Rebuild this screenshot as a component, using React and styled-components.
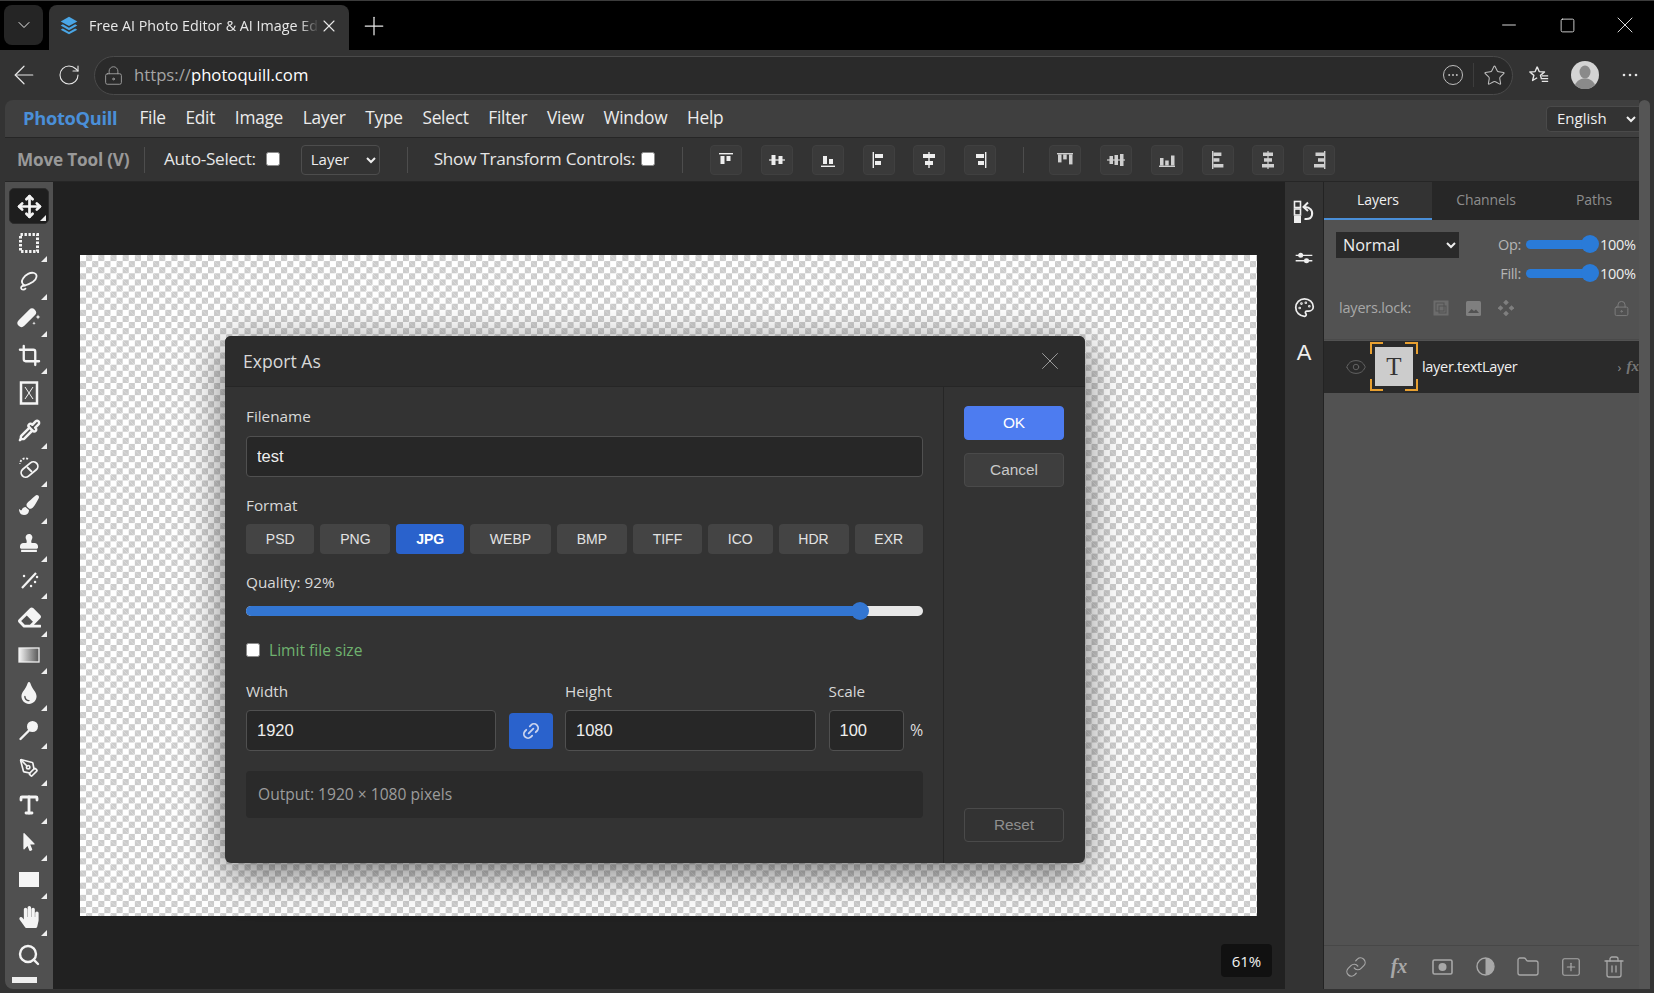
import React from 'react'
import styled, { createGlobalStyle } from 'styled-components'
import {
  ArrowLeft, ChevronDown, Crop, Eye, Folder, Link, Link2, LockKeyhole, Minus,
  Move, Palette, PenTool, Pipette, Plus, RotateCw, Search, Square, SquarePlus, Star, Trash2, Type, X
} from 'lucide-react'
import { FaEraser, FaHandPaper, FaMousePointer, FaPaintBrush, FaStamp, FaTint } from 'react-icons/fa'

const UI_FONT = `'Open Sans', 'Noto Sans', sans-serif`
const ARIAL = `'Liberation Sans', Arial, sans-serif`

const GlobalStyle = createGlobalStyle`
  html, body { margin: 0; padding: 0; background: #333; }
  * { box-sizing: border-box; }
  body { font-family: ${UI_FONT}; overflow: hidden; }
`

const Page = styled.div`
  position: relative;
  width: 1654px;
  height: 993px;
  display: flex;
  flex-direction: column;
  background: #333;
  overflow: hidden;
`

/* browser chrome */
const TitleBar = styled.div`
  height: 50px;
  flex: none;
  background: #000;
  border-top: 1px solid #3c3c3c;
  display: flex;
  align-items: flex-end;
  color: #e8e8e8;
`
const TabMenu = styled.div`
  width: 39px;
  height: 40px;
  margin: 0 6px 5px 4px;
  background: #252525;
  border-radius: 8px;
  display: flex;
  align-items: center;
  justify-content: center;
`
const Tab = styled.div`
  width: 300px;
  height: 45px;
  background: #333;
  border-radius: 8px 8px 0 0;
  display: flex;
  align-items: center;
  padding: 0 9px 3px 10px;
`
const TabTitle = styled.div`
  width: 240px;
  flex: none;
  padding: 0 0 1px 10px;
  font-size: 14.3px;
  white-space: nowrap;
  overflow: hidden;
  mask-image: linear-gradient(to right, #000 92%, transparent 100%);
`
const NewTab = styled.div`
  margin: 0 0 6px 10px;
  height: 36px;
  display: flex;
  align-items: center;
`
const WindowButtons = styled.div`
  margin-left: auto;
  display: flex;
  align-items: center;
  padding-bottom: 11px;
`
const WindowSlot = styled.div`
  width: 58px;
  display: flex;
  align-items: center;
  justify-content: center;
`
const BrowserBar = styled.div`
  height: 50px;
  flex: none;
  background: #333;
  display: flex;
  align-items: center;
  padding: 0 12px 0 9px;
  color: #e6e6e6;
`
const NavSlot = styled.div`
  width: ${p => p.$w}px;
  display: flex;
  align-items: center;
  flex: none;
`
const AddressBar = styled.div`
  width: 1420px;
  height: 39px;
  margin-left: 6px;
  background: #2a2a2a;
  border: 1px solid #4a4a4a;
  border-radius: 20px;
  display: flex;
  align-items: center;
  padding: 0 6px 0 8px;
`
const Url = styled.div`
  margin: 0 0 1px 10px;
  font-size: 16.7px;
  color: #fff;
  span { color: #a5a5a5; }
`
const AddressEnd = styled.div`
  margin-left: auto;
  display: flex;
  align-items: center;
  gap: 9px;
  color: #bdbdbd;
`
const AddressDivider = styled.div`
  width: 1px;
  height: 24px;
  background: #3d3d3d;
`
const FavoritesSlot = styled.div`
  width: 22px;
  margin-left: 15px;
  flex: none;
  display: flex;
`
const Avatar = styled.div`
  width: 28px;
  height: 28px;
  margin: 0 23px 0 21px;
  flex: none;
  svg { display: block; }
`

/* app frame */
const Shell = styled.div`
  flex: 1;
  min-height: 0;
  display: flex;
  padding: 0 4px 4px 5px;
`
const AppColumn = styled.div`
  width: 1634px;
  flex: none;
  display: flex;
  flex-direction: column;
  border-radius: 8px 0 0 8px;
  overflow: hidden;
`
const ScrollStrip = styled.div`
  width: 11px;
  flex: none;
  background: #555;
  border-radius: 6px 6px 0 0;
`
const MenuBar = styled.div`
  height: 38px;
  flex: none;
  background: #3f3f3f;
  border-bottom: 1px solid #262626;
  display: flex;
  align-items: center;
  padding-left: 18px;
`
const Brand = styled.div`
  font-weight: 700;
  font-size: 18.3px;
  letter-spacing: -0.3px;
  color: #4a8fd8;
  margin: 0 22px 3px 0;
`
const MenuItem = styled.div`
  font-size: 17.3px;
  letter-spacing: -0.25px;
  color: #ececec;
  margin: 0 19.7px 3px 0;
`
const baseSelect = `
  font-family: ${UI_FONT};
  color: #eee;
  outline: none;
`
const LanguageSelect = styled.select`
  ${baseSelect}
  margin-left: auto;
  width: 93px;
  height: 26px;
  background: #333;
  border: 1px solid #4a4a4a;
  border-right: none;
  border-radius: 5px 0 0 5px;
  font-size: 15px;
  padding: 0 0 2px 6px;
`
const OptionsBar = styled.div`
  height: 44px;
  flex: none;
  background: #333;
  border-bottom: 1px solid #262626;
  display: flex;
  align-items: center;
  padding-left: 12px;
`
const ToolName = styled.div`
  width: 113px;
  flex: none;
  white-space: nowrap;
  font-size: 17.2px;
  font-weight: 700;
  letter-spacing: -0.2px;
  color: #999;
  margin: 0 14px 1px 0;
`
const Sep = styled.div`
  width: 1px;
  height: ${p => p.$h || 26}px;
  background: #4d4d4d;
  flex: none;
  margin-right: ${p => p.$mr}px;
`
const OptionLabel = styled.label`
  display: flex;
  align-items: center;
  gap: ${p => p.$gap}px;
  font-size: 17.2px;
  letter-spacing: -0.3px;
  line-height: 24px;
  color: #e6e6e6;
  margin-right: ${p => p.$mr}px;
  padding-bottom: 2px;
  white-space: nowrap;
`
const Check = styled.input.attrs({ type: 'checkbox', readOnly: true })`
  appearance: none;
  width: 14px;
  height: 14px;
  margin: 0;
  background: #fff;
  border: 1px solid #8a8a8a;
  border-radius: 2.5px;
  flex: none;
`
const LayerSelect = styled.select`
  ${baseSelect}
  width: 79px;
  height: 30px;
  background: #333;
  border: 1px solid #4d4d4d;
  border-radius: 4px;
  font-size: 15px;
  padding: 0 0 2px 5px;
  margin-right: 27px;
`
const AlignGroup = styled.div`
  display: flex;
  gap: 18.8px;
  margin-right: ${p => p.$mr || 0}px;
`
const AlignButton = styled.div`
  width: 32px;
  height: 30px;
  background: #3a3a3a;
  border: 1px solid #404040;
  border-radius: 4px;
  display: flex;
  align-items: center;
  justify-content: center;
  color: ${p => p.$dim ? '#cfcfcf' : '#eee'};
`

/* workspace */
const Workspace = styled.div`
  flex: 1;
  min-height: 0;
  display: flex;
  background: #333;
`
const ToolColumn = styled.div`
  width: 48px;
  flex: none;
  background: #505050;
  padding: 6px 4px 0;
  position: relative;
  overflow: hidden;
`
const ToolButton = styled.div`
  position: relative;
  height: ${p => p.$active ? 36 : 37.45}px;
  margin-bottom: ${p => p.$active ? 0.7 : 0}px;
  border-radius: 5px;
  background: ${p => p.$active ? '#1e1e1e' : 'transparent'};
  border: ${p => p.$active ? '1px solid #2c2c2c' : 'none'};
  display: flex;
  align-items: center;
  justify-content: center;
  color: #f4f4f4;
  &::after {
    content: ${p => p.$corner ? "''" : 'none'};
    position: absolute;
    right: 2px;
    bottom: ${p => p.$active ? 2 : 0}px;
    border-style: solid;
    border-width: 0 0 6px 6px;
    border-color: transparent transparent #eee transparent;
  }
`
const ToolSliver = styled.div`
  width: 25px;
  height: 6px;
  margin: 4px 0 0 3px;
  background: #eee;
`
const CanvasArea = styled.div`
  width: 1232px;
  flex: none;
  background: #212121;
  padding: 73px 0 0 27px;
  position: relative;
`
const Canvas = styled.div`
  width: 1177px;
  height: 661px;
  background-color: #fff;
  background-image:
    linear-gradient(45deg, #ccc 25%, transparent 25%, transparent 75%, #ccc 75%),
    linear-gradient(45deg, #ccc 25%, transparent 25%, transparent 75%, #ccc 75%);
  background-size: 12.2px 12.2px;
  background-position: 0 0, 6.1px 6.1px;
`
const ZoomBadge = styled.div`
  position: absolute;
  right: 13px;
  bottom: 12px;
  width: 51px;
  height: 33px;
  background: #111;
  border-radius: 4px;
  color: #f2f2f2;
  font-size: 15px;
  display: flex;
  align-items: center;
  justify-content: center;
`
const SideStrip = styled.div`
  width: 39px;
  flex: none;
  background: #333;
  border-right: 1px solid #232323;
  display: flex;
  flex-direction: column;
  align-items: center;
  padding-top: 10px;
  color: #eee;
`
const SideSlot = styled.div`
  height: ${p => p.$h}px;
  display: flex;
  align-items: center;
  justify-content: center;
`
const SideLetter = styled.span`
  font-family: ${ARIAL};
  font-size: 22px;
`

/* layers panel */
const Panel = styled.div`
  flex: 1;
  min-width: 0;
  background: #525252;
  display: flex;
  flex-direction: column;
  position: relative;
`
const Tabs = styled.div`
  height: 38px;
  flex: none;
  display: flex;
  background: #272727;
  overflow: hidden;
`
const PanelTab = styled.div`
  width: 108px;
  flex: none;
  display: flex;
  align-items: center;
  justify-content: center;
  font-size: 14px;
  letter-spacing: -0.1px;
  padding-bottom: 1px;
  background: ${p => p.$active ? '#333' : 'transparent'};
  color: ${p => p.$active ? '#f0f0f0' : '#8d8d8d'};
  border-bottom: 2px solid ${p => p.$active ? '#4a8fd8' : 'transparent'};
`
const BlendArea = styled.div`
  height: 120px;
  flex: none;
  padding: 12px 2px 0 12px;
  border-bottom: 1px solid #4a4a4a;
`
const BlendRow = styled.div`
  display: flex;
`
const BlendSelect = styled.select`
  ${baseSelect}
  width: 123px;
  height: 26px;
  background: #2a2a2a;
  border: none;
  font-size: 16.3px;
  padding: 0 0 1px 3px;
`
const SliderStack = styled.div`
  margin: 1px 0 0 auto;
  display: flex;
  flex-direction: column;
  gap: 7px;
`
const SliderRow = styled.div`
  display: flex;
  align-items: center;
  height: 22px;
  font-size: 14.5px;
`
const SliderLabel = styled.div`
  width: 38px;
  text-align: right;
  margin-right: 5px;
  color: #b5b5b5;
  letter-spacing: -0.3px;
`
const SliderValue = styled.div`
  width: 37px;
  color: #eee;
  letter-spacing: -0.3px;
`
const MiniTrack = styled.div`
  position: relative;
  width: 64px;
  height: 9px;
  background: #2a7bd8;
  border-radius: 5px;
  margin-right: 10px;
  &::after {
    content: '';
    position: absolute;
    right: -9px;
    top: -4.5px;
    width: 18px;
    height: 18px;
    border-radius: 50%;
    background: #2a7bd8;
  }
`
const LockRow = styled.div`
  display: flex;
  align-items: center;
  margin: 11px 0 0 3px;
  height: 26px;
  color: #7f7f7f;
`
const LockLabel = styled.div`
  font-size: 14.5px;
  letter-spacing: -0.2px;
  color: #a8a8a8;
  width: 94px;
  padding-bottom: 1px;
`
const LockIcons = styled.div`
  display: flex;
  gap: 17px;
  align-items: center;
`
const LockEnd = styled.div`
  margin-left: auto;
  margin-right: 7px;
  display: flex;
`
const LayerRow = styled.div`
  height: 52px;
  flex: none;
  margin-top: 1px;
  background: #2a2a2a;
  display: flex;
  align-items: center;
  padding: 0 0 1px 21px;
  position: relative;
  overflow: hidden;
`
const LayerThumb = styled.div`
  position: relative;
  width: 38px;
  height: 39px;
  margin: 0 9px 0 8px;
  background: #ccc;
  display: flex;
  align-items: center;
  justify-content: center;
  font-family: 'Liberation Serif', serif;
  font-size: 25px;
  color: #333;
  &::before {
    content: '';
    position: absolute;
    inset: -5px;
    background:
      linear-gradient(#e8a030 0 0) left top / 13px 2px,
      linear-gradient(#e8a030 0 0) left top / 2px 12px,
      linear-gradient(#e8a030 0 0) right top / 13px 2px,
      linear-gradient(#e8a030 0 0) right top / 2px 12px,
      linear-gradient(#e8a030 0 0) left bottom / 13px 2px,
      linear-gradient(#e8a030 0 0) left bottom / 2px 12px,
      linear-gradient(#e8a030 0 0) right bottom / 13px 2px,
      linear-gradient(#e8a030 0 0) right bottom / 2px 12px;
    background-repeat: no-repeat;
  }
`
const LayerName = styled.div`
  font-size: 14.5px;
  letter-spacing: -0.3px;
  color: #f0f0f0;
  padding-bottom: 1px;
`
const LayerEnd = styled.div`
  margin-left: auto;
  display: flex;
  align-items: center;
  gap: 5px;
  color: #888;
  font-size: 13px;
`
const FxMark = styled.span`
  font-family: 'Liberation Serif', serif;
  font-style: italic;
  font-weight: 700;
  font-size: ${p => p.$size || 15}px;
  color: ${p => p.$color || '#777'};
`
const PanelFooter = styled.div`
  margin-top: auto;
  height: 44px;
  flex: none;
  border-top: 1px solid #474747;
  display: flex;
  align-items: center;
  color: #a8a8a8;
  padding: 0 13px 2px 20px;
  justify-content: space-between;
`
const FooterSlot = styled.div`
  width: 24px;
  display: flex;
  align-items: center;
  justify-content: center;
`

/* export dialog */
const Dialog = styled.div`
  position: absolute;
  left: 225px;
  top: 336px;
  width: 860px;
  height: 527px;
  background: #333;
  border-radius: 6px;
  box-shadow: 0 10px 40px rgba(0, 0, 0, 0.55);
  display: flex;
  flex-direction: column;
  overflow: hidden;
  color: #ddd;
`
const DialogHeader = styled.div`
  height: 51px;
  flex: none;
  background: #2c2c2c;
  border-bottom: 1px solid #262626;
  display: flex;
  align-items: center;
  justify-content: space-between;
  padding: 0 20px 0 18px;
  font-size: 17.6px;
  color: #d8d8d8;
  svg { color: #9a9a9a; }
`
const DialogBody = styled.div`
  flex: 1;
  min-height: 0;
  display: flex;
`
const DialogMain = styled.div`
  width: 718px;
  flex: none;
  padding: 20px 20px 0 21px;
`
const DialogSide = styled.div`
  flex: 1;
  border-left: 1px solid #262626;
  padding: 19px 21px 21px 20px;
  display: flex;
  flex-direction: column;
`
const Section = styled.div`
  margin-bottom: ${p => p.$mb}px;
`
const FieldLabel = styled.div`
  font-size: 15.3px;
  line-height: 18px;
  padding-bottom: 2px;
  color: #d8d8d8;
  margin-bottom: ${p => p.$mb ?? 9}px;
`
const TextBox = styled.input.attrs({ readOnly: true })`
  display: block;
  width: 100%;
  height: 41px;
  background: #272727;
  border: 1px solid #505050;
  border-radius: 4px;
  padding: 0 ${p => p.$pad || 10}px 1px;
  font-family: ${ARIAL};
  font-size: 16.5px;
  color: #eee;
  outline: none;
`
const Chips = styled.div`
  display: flex;
  gap: 6px;
`
const Chip = styled.div`
  flex: 1 1 auto;
  height: 30px;
  padding: 0 10px 1px;
  border-radius: 4px;
  display: flex;
  align-items: center;
  justify-content: center;
  font-family: ${ARIAL};
  font-size: 14px;
  font-weight: ${p => p.$active ? 700 : 400};
  background: ${p => p.$active ? '#2a62cc' : '#444'};
  color: ${p => p.$active ? '#fff' : '#e2e2e2'};
`
const QualityTrack = styled.div`
  position: relative;
  height: 10px;
  background: #e8e8e8;
  border-radius: 5px;
`
const QualityFill = styled.div`
  height: 100%;
  background: #3376d2;
  border-radius: 5px 0 0 5px;
`
const QualityThumb = styled.div`
  position: absolute;
  top: -4px;
  width: 18px;
  height: 18px;
  margin-left: -9px;
  border-radius: 50%;
  background: #3376d2;
`
const LimitRow = styled.div`
  display: flex;
  align-items: center;
  gap: 9px;
  height: 20px;
  font-size: 15.6px;
  color: #6fb26f;
`
const SizeGrid = styled.div`
  display: grid;
  grid-template-columns: 250px 44px 251px 75px 1fr;
  column-gap: 12.5px;
`
const GridLabel = styled(FieldLabel)`
  margin-bottom: 8px;
  grid-column: ${p => p.$col};
`
const LinkButton = styled.div`
  height: 36px;
  align-self: center;
  background: #2a62cc;
  border-radius: 4px;
  display: flex;
  align-items: center;
  justify-content: center;
  color: #c9d3ee;
`
const Percent = styled.div`
  display: flex;
  align-items: center;
  margin-left: -6px;
  padding-bottom: 2px;
  font-size: 16px;
  color: #ddd;
`
const OutputBox = styled.div`
  height: 47px;
  background: #2a2a2a;
  border-radius: 4px;
  display: flex;
  align-items: center;
  padding: 0 0 2px 12px;
  font-size: 15.6px;
  color: #9c9c9c;
`
const ActionButton = styled.div`
  height: 34px;
  flex: none;
  border-radius: 4px;
  display: flex;
  align-items: center;
  justify-content: center;
  font-family: ${ARIAL};
  font-size: 15.4px;
  margin-top: ${p => p.$mt || '0'};
  background: ${p => p.$bg};
  border: 1px solid ${p => p.$line};
  color: ${p => p.$fg};
`

const Svg = ({ size = 24, box = 24, children, ...rest }) => (
  <svg width={size} height={size} viewBox={`0 0 ${box} ${box}`} fill='currentColor' {...rest}>{children}</svg>
)

const Favicon = () => (
  <Svg size={20} fill='#4aa6e6'>
    <path d='M12 1l10 5.5L12 12 2 6.5z' />
    <path d='M12 14.2L4.6 10 2 11.5 12 17l10-5.5-2.6-1.5z' />
    <path d='M12 19.2L4.6 15 2 16.5 12 22l10-5.5-2.6-1.5z' />
  </Svg>
)
const PageMenuIcon = () => (
  <svg width='22' height='22' viewBox='0 0 22 22' fill='none' stroke='currentColor' strokeWidth='1'>
    <circle cx='11' cy='11' r='9.5' />
    <g fill='currentColor' stroke='none'>
      <circle cx='7.2' cy='11' r='1' /><circle cx='11' cy='11' r='1' /><circle cx='14.8' cy='11' r='1' />
    </g>
  </svg>
)
const FavoritesIcon = () => (
  <Svg size={22} fill='none' stroke='currentColor' strokeWidth='1.5' strokeLinejoin='round'>
    <path d='M10 3l2.2 5.3 5.8.4-4.4 3.7 1.2 4.2M10 3L7.8 8.3 2 8.7l4.4 3.7L5 18l5-3' />
    <path d='M15 13h7M15 16h7M15 19h7' />
  </Svg>
)
const ProfileIcon = () => (
  <svg width='28' height='28' viewBox='0 0 28 28'>
    <circle cx='14' cy='14' r='14' fill='#d4d4d4' />
    <ellipse cx='14' cy='11' rx='5.5' ry='6.5' fill='#8a8a8a' />
    <path d='M4 24c2-5 6-6.5 10-6.5S22 19 24 24a14 14 0 0 1-20 0z' fill='#8a8a8a' />
  </svg>
)

const MarqueeIcon = () => (
  <Svg fill='none' stroke='currentColor' strokeWidth='3'><rect x='3.5' y='3.5' width='17' height='17' strokeDasharray='2.4 1.6' /></Svg>
)
const LassoIcon = () => (
  <Svg fill='none' stroke='currentColor' strokeWidth='1.8' strokeLinecap='round'>
    <path d='M8 16.5c-3-1-4-4-2-7 2.5-4 7.5-6.5 11-5.5 4 1.2 3 6-1 8.8-3 2-5.5 3-8 3.7z' />
    <path d='M8 16.5c-2.5-.2-4.5 1.2-3.8 3 .6 1.5 3 1.5 4.3.2' />
  </Svg>
)
const WandIcon = () => (
  <Svg>
    <path d='M4.5 17L15 6.5' stroke='currentColor' strokeWidth='8' strokeLinecap='round' />
    <path d='M21 8.5l.7 1.800 1.600.7-1.600.7-.7 1.800-.7-1.800-1.600-.7 1.600-.7zM17 15.500l.5 1.200 1.200.5-1.200.5-.5 1.200-.5-1.200-1.200-.5 1.200-.5z' />
  </Svg>
)
const FrameIcon = () => (
  <Svg fill='none' stroke='currentColor'>
    <rect x='4' y='1.5' width='16' height='21' strokeWidth='2.5' />
    <path d='M8 6l8 12M16 6L8 18' strokeWidth='1' />
  </Svg>
)
const HealIcon = () => (
  <Svg fill='none' stroke='currentColor' strokeWidth='1.8'>
    <path d='M11 3a5.5 5.5 0 0 0-8 5' strokeDasharray='2 1.5' />
    <rect x='3' y='9' width='19' height='9' rx='4.5' transform='rotate(-40 12.5 13.5)' />
    <path d='M10 11l5 5' />
  </Svg>
)
const RestoreIcon = () => (
  <Svg fill='none' stroke='currentColor' strokeWidth='2.2'>
    <path d='M5 20L19 5' />
    <path d='M14 18h.1M18 14h.1M20 9h.1M7 8h.1' strokeLinecap='round' strokeWidth='2.4' />
  </Svg>
)
const GradientIcon = () => (
  <svg width='22' height='16' viewBox='0 0 22 16'>
    <defs>
      <linearGradient id='toolGrad'>
        <stop offset='0' stopColor='#f4f4f4' />
        <stop offset='1' stopColor='#555' />
      </linearGradient>
    </defs>
    <rect x='1' y='1' width='20' height='14' fill='url(#toolGrad)' stroke='#eee' strokeWidth='1.3' />
  </svg>
)
const DodgeIcon = () => (
  <Svg>
    <circle cx='15.5' cy='8.5' r='5.5' />
    <path d='M12 12.5L3.5 21' stroke='currentColor' strokeWidth='2.4' strokeLinecap='round' />
  </Svg>
)
const RectIcon = () => <svg width='20' height='15'><rect width='20' height='15' fill='currentColor' /></svg>

const tools = [
  [<Move key='m' size={25} strokeWidth={2.6} />, true],
  [<MarqueeIcon key='q' />, true],
  [<LassoIcon key='l' />, true],
  [<WandIcon key='w' />, true],
  [<Crop key='c' size={23} strokeWidth={2.4} />, true],
  [<FrameIcon key='f' />, false],
  [<Pipette key='p' size={23} strokeWidth={2.6} />, true],
  [<HealIcon key='h' />, true],
  [<FaPaintBrush key='b' size={20} />, true],
  [<FaStamp key='s' size={18} />, true],
  [<RestoreIcon key='r' />, true],
  [<FaEraser key='e' size={23} />, true],
  [<GradientIcon key='g' />, true],
  [<FaTint key='t' size={22} />, true],
  [<DodgeIcon key='d' />, true],
  [<PenTool key='n' size={20} strokeWidth={2} />, true],
  [<Type key='y' size={24} strokeWidth={2.8} />, true],
  [<FaMousePointer key='a' size={18} />, true],
  [<RectIcon key='x' />, true],
  [<FaHandPaper key='i' size={22} />, true],
  [<Search key='z' size={24} strokeWidth={2.4} />, false]
]

// rects are x, y, w, h in an 18 unit box
const alignIcons = [
  [[2, 2, 14, 1.4], [3.5, 5, 4, 8], [9.5, 5, 4, 5]],
  [[1, 8.4, 16, 1.2], [3.5, 4, 4, 10], [10.5, 5, 4, 8]],
  [[2, 14.6, 14, 1.4], [4, 5, 4, 8], [10, 8, 4, 5]],
  [[2.6, 1, 1.4, 16], [5, 3, 8, 4], [5, 10, 6, 4]],
  [[8.3, 1, 1.4, 16], [3, 3, 12, 4], [5, 10, 8, 4]],
  [[14, 1, 1.4, 16], [5, 3, 8, 4], [7, 10, 6, 4]]
]
const distributeIcons = [
  [[1, 2, 16, 1.4], [2, 3.4, 3.5, 8], [7.2, 3.4, 3.5, 5], [13, 3.4, 3.5, 10]],
  [[0, 8.4, 18, 1.2], [2.5, 5, 3.5, 8], [7.5, 4, 3.5, 10], [13, 3, 3.5, 12]],
  [[1, 14.6, 16, 1.4], [2, 7, 3.5, 7.6], [7.2, 9.5, 3.5, 5], [13, 4.5, 3.5, 10]],
  [[3, 0, 1.4, 18], [4.4, 1.5, 8, 3.5], [4.4, 7.2, 6, 3.5], [4.4, 13, 10, 3.5]],
  [[8.4, 0, 1.2, 18], [4, 1.5, 10, 3.5], [5, 7.2, 8, 3.5], [3, 13, 12, 3.5]],
  [[14, 0, 1.4, 18], [5.5, 1.5, 8.5, 3.5], [8, 7.2, 6, 3.5], [4, 13, 10, 3.5]]
]

const AlignIcon = ({ rects }) => (
  <Svg size={18} box={18}>
    {rects.map(([x, y, width, height], i) => <rect key={i} x={x} y={y} width={width} height={height} />)}
  </Svg>
)

const HistoryIcon = () => (
  <Svg size={24} fill='none' stroke='currentColor'>
    <rect x='2.5' y='1.5' width='6' height='6' strokeWidth='1.6' />
    <rect x='2.5' y='9' width='6' height='6' strokeWidth='1.6' />
    <rect x='2' y='16' width='7' height='7' fill='currentColor' stroke='none' />
    <path d='M13 7c5 0 8 3.5 7 8-.6 3-3.5 4.5-7.5 4' strokeWidth='2' />
    <path d='M16 2.5L11.500 7l4.500 4' strokeWidth='2' />
  </Svg>
)
const SlidersIcon = () => (
  <Svg size={20} fill='currentColor'>
    <path d='M2 8h20v1.6H2zM2 14.5h20v1.6H2z' />
    <circle cx='8' cy='8.8' r='3' />
    <circle cx='15' cy='15.3' r='3' />
  </Svg>
)
const LockImages = () => (
  <Svg size={16} box={16}>
    <rect x='0.5' y='0.5' width='15' height='15' opacity='0.6' />
    <rect x='3' y='3' width='8' height='8' fill='none' stroke='#525252' />
    <rect x='6' y='6' width='7' height='7' fill='none' stroke='#525252' />
  </Svg>
)
const LockImage = () => (
  <Svg size={15} box={15}>
    <rect width='15' height='15' rx='1.5' />
    <path d='M2 12l3.5-4 2.5 2 2-1.5L13 12z' fill='#525252' />
  </Svg>
)
const LockMove = () => (
  <Svg size={16} box={16}>
    <rect x='6' y='0.5' width='4' height='4' transform='rotate(45 8 2.5)' />
    <rect x='6' y='11.5' width='4' height='4' transform='rotate(45 8 13.5)' />
    <rect x='0.5' y='6' width='4' height='4' transform='rotate(45 2.5 8)' />
    <rect x='11.5' y='6' width='4' height='4' transform='rotate(45 13.5 8)' />
  </Svg>
)
const MaskIcon = () => (
  <svg width='21' height='16' viewBox='0 0 21 16'>
    <rect x='1' y='1' width='19' height='14' rx='1.5' fill='none' stroke='currentColor' strokeWidth='1.6' />
    <circle cx='10.5' cy='8' r='4' fill='currentColor' />
  </svg>
)
const AdjustIcon = () => (
  <svg width='19' height='19' viewBox='0 0 19 19'>
    <circle cx='9.5' cy='9.5' r='8.5' fill='none' stroke='currentColor' strokeWidth='1.4' />
    <path d='M9.5 1a8.5 8.5 0 0 1 0 17z' fill='currentColor' />
  </svg>
)
const DotsIcon = () => (
  <svg width='16' height='4'>
    <g fill='#e6e6e6'><circle cx='2' cy='2' r='1.3' /><circle cx='8' cy='2' r='1.3' /><circle cx='14' cy='2' r='1.3' /></g>
  </svg>
)

const formats = ['PSD', 'PNG', 'JPG', 'WEBP', 'BMP', 'TIFF', 'ICO', 'HDR', 'EXR']
const menus = ['File', 'Edit', 'Image', 'Layer', 'Type', 'Select', 'Filter', 'View', 'Window', 'Help']

export default function App () {
  const quality = 90.7

  return (
    <Page>
      <GlobalStyle />
      <TitleBar>
        <TabMenu><ChevronDown size={20} strokeWidth={1.2} /></TabMenu>
        <Tab>
          <Favicon />
          <TabTitle>Free AI Photo Editor &amp; AI Image Editor</TabTitle>
          <X size={20} strokeWidth={1.3} />
        </Tab>
        <NewTab><Plus size={30} strokeWidth={1} /></NewTab>
        <WindowButtons>
          <WindowSlot><Minus size={22} strokeWidth={1} /></WindowSlot>
          <WindowSlot><Square size={17} strokeWidth={1.2} /></WindowSlot>
          <WindowSlot><X size={28} strokeWidth={0.8} /></WindowSlot>
        </WindowButtons>
      </TitleBar>

      <BrowserBar>
        <NavSlot $w={48}><ArrowLeft size={30} strokeWidth={0.95} /></NavSlot>
        <NavSlot $w={31}><RotateCw size={24} strokeWidth={1.1} /></NavSlot>
        <AddressBar>
          <LockKeyhole size={21} strokeWidth={1} color='#a5a5a5' />
          <Url><span>https://</span>photoquill.com</Url>
          <AddressEnd>
            <PageMenuIcon />
            <AddressDivider />
            <Star size={23} strokeWidth={1.1} />
          </AddressEnd>
        </AddressBar>
        <FavoritesSlot><FavoritesIcon /></FavoritesSlot>
        <Avatar><ProfileIcon /></Avatar>
        <NavSlot $w={20}><DotsIcon /></NavSlot>
      </BrowserBar>

      <Shell>
        <AppColumn>
          <MenuBar>
            <Brand>PhotoQuill</Brand>
            {menus.map(m => <MenuItem key={m}>{m}</MenuItem>)}
            <LanguageSelect defaultValue='en'><option value='en'>English</option></LanguageSelect>
          </MenuBar>
          <OptionsBar>
            <ToolName>Move Tool (V)</ToolName>
            <Sep $mr={19} />
            <OptionLabel $gap={10} $mr={21}>Auto-Select: <Check /></OptionLabel>
            <LayerSelect defaultValue='l'><option value='l'>Layer</option></LayerSelect>
            <Sep $mr={26} />
            <OptionLabel $gap={6} $mr={27}>Show Transform Controls: <Check /></OptionLabel>
            <Sep $mr={27} />
            <AlignGroup $mr={27}>
              {alignIcons.map((rects, i) => <AlignButton key={i}><AlignIcon rects={rects} /></AlignButton>)}
            </AlignGroup>
            <Sep $mr={25} />
            <AlignGroup>
              {distributeIcons.map((rects, i) => <AlignButton key={i} $dim><AlignIcon rects={rects} /></AlignButton>)}
            </AlignGroup>
          </OptionsBar>

          <Workspace>
            <ToolColumn>
              {tools.map(([icon, corner], i) => (
                <ToolButton key={i} $active={i === 0} $corner={corner}>{icon}</ToolButton>
              ))}
              <ToolSliver />
            </ToolColumn>
            <CanvasArea>
              <Canvas />
              <ZoomBadge>61%</ZoomBadge>
            </CanvasArea>
            <SideStrip>
              <SideSlot $h={40}><HistoryIcon /></SideSlot>
              <SideSlot $h={52}><SlidersIcon /></SideSlot>
              <SideSlot $h={46}><Palette size={21} strokeWidth={2} /></SideSlot>
              <SideSlot $h={46}><SideLetter>A</SideLetter></SideSlot>
            </SideStrip>
            <Panel>
              <Tabs>
                <PanelTab $active>Layers</PanelTab>
                <PanelTab>Channels</PanelTab>
                <PanelTab>Paths</PanelTab>
              </Tabs>
              <BlendArea>
                <BlendRow>
                  <BlendSelect defaultValue='n'><option value='n'>Normal</option></BlendSelect>
                  <SliderStack>
                    <SliderRow>
                      <SliderLabel>Op:</SliderLabel><MiniTrack /><SliderValue>100%</SliderValue>
                    </SliderRow>
                    <SliderRow>
                      <SliderLabel>Fill:</SliderLabel><MiniTrack /><SliderValue>100%</SliderValue>
                    </SliderRow>
                  </SliderStack>
                </BlendRow>
                <LockRow>
                  <LockLabel>layers.lock:</LockLabel>
                  <LockIcons><LockImages /><LockImage /><LockMove /></LockIcons>
                  <LockEnd><LockKeyhole size={17} strokeWidth={1.3} /></LockEnd>
                </LockRow>
              </BlendArea>
              <LayerRow>
                <Eye size={22} strokeWidth={1} color='#666' />
                <LayerThumb>T</LayerThumb>
                <LayerName>layer.textLayer</LayerName>
                <LayerEnd>› <FxMark>fx</FxMark></LayerEnd>
              </LayerRow>
              <PanelFooter>
                <FooterSlot><Link size={22} strokeWidth={1.3} /></FooterSlot>
                <FooterSlot><FxMark $size={20} $color='#a8a8a8'>fx</FxMark></FooterSlot>
                <FooterSlot><MaskIcon /></FooterSlot>
                <FooterSlot><AdjustIcon /></FooterSlot>
                <FooterSlot><Folder size={24} strokeWidth={1.3} /></FooterSlot>
                <FooterSlot><SquarePlus size={22} strokeWidth={1.3} /></FooterSlot>
                <FooterSlot><Trash2 size={24} strokeWidth={1.3} /></FooterSlot>
              </PanelFooter>
            </Panel>
          </Workspace>
        </AppColumn>
        <ScrollStrip />
      </Shell>

      <Dialog>
        <DialogHeader>
          Export As
          <X size={30} strokeWidth={0.8} />
        </DialogHeader>
        <DialogBody>
          <DialogMain>
            <Section $mb={19}>
              <FieldLabel>Filename</FieldLabel>
              <TextBox defaultValue='test' />
            </Section>
            <Section $mb={19}>
              <FieldLabel $mb={8}>Format</FieldLabel>
              <Chips>
                {formats.map(f => <Chip key={f} $active={f === 'JPG'}>{f}</Chip>)}
              </Chips>
            </Section>
            <Section $mb={24}>
              <FieldLabel $mb={13}>Quality: 92%</FieldLabel>
              <QualityTrack>
                <QualityFill style={{ width: `${quality}%` }} />
                <QualityThumb style={{ left: `${quality}%` }} />
              </QualityTrack>
            </Section>
            <Section $mb={22}>
              <LimitRow><Check />Limit file size</LimitRow>
            </Section>
            <Section $mb={20}>
              <SizeGrid>
                <GridLabel $col='1'>Width</GridLabel>
                <GridLabel $col='3'>Height</GridLabel>
                <GridLabel $col='4 / 6'>Scale</GridLabel>
                <TextBox defaultValue='1920' />
                <LinkButton><Link2 size={20} strokeWidth={2.2} style={{ transform: 'rotate(-45deg)' }} /></LinkButton>
                <TextBox defaultValue='1080' />
                <TextBox defaultValue='100' />
                <Percent>%</Percent>
              </SizeGrid>
            </Section>
            <OutputBox>Output: 1920 × 1080 pixels</OutputBox>
          </DialogMain>
          <DialogSide>
            <ActionButton $bg='#4d7cf0' $line='#4d7cf0' $fg='#fff'>OK</ActionButton>
            <ActionButton $mt='13px' $bg='#3e3e3e' $line='#4a4a4a' $fg='#c8c8c8'>Cancel</ActionButton>
            <ActionButton $mt='auto' $bg='transparent' $line='#4a4a4a' $fg='#8f8f8f'>Reset</ActionButton>
          </DialogSide>
        </DialogBody>
      </Dialog>
    </Page>
  )
}
